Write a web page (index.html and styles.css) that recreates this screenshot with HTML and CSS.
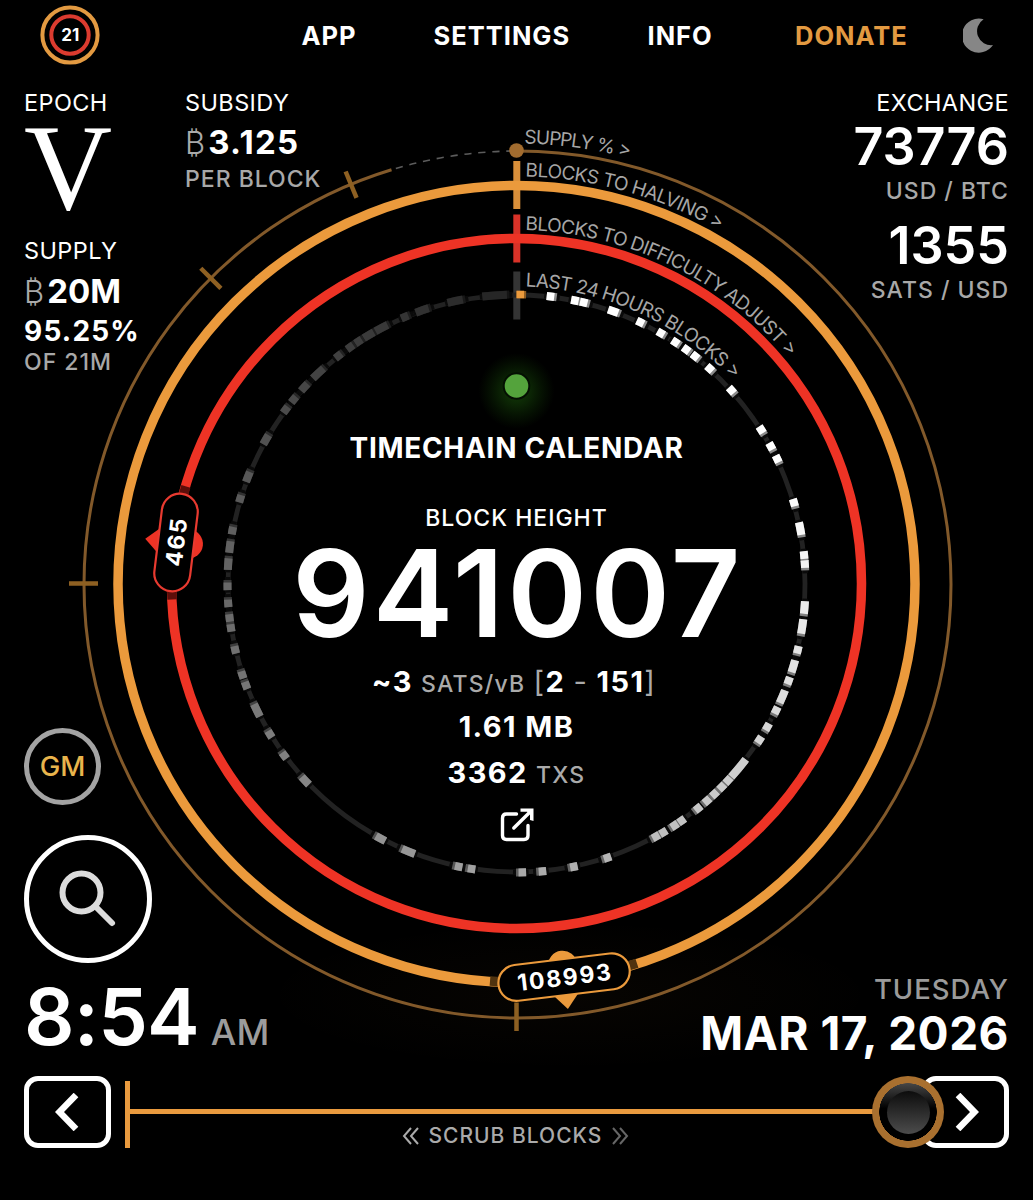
FILE: index.html
```html
<!DOCTYPE html>
<html lang="en">
<head>
<meta charset="utf-8">
<title>Timechain Calendar</title>
<link rel="stylesheet" href="styles.css">
</head>
<body>
<header class="topbar">
  <svg class="logo" viewBox="0 0 60 60">
    <circle class="logo-outer" cx="30" cy="30" r="27.6"/>
    <circle class="logo-inner" cx="30" cy="30" r="18.7"/>
    <text class="logo-text" x="30.3" y="36.2">21</text>
  </svg>
  <nav class="nav">
    <a class="nav-app">APP</a>
    <a class="nav-settings">SETTINGS</a>
    <a class="nav-info">INFO</a>
    <a class="nav-donate">DONATE</a>
  </nav>
  <svg class="moon" viewBox="0 0 32 36"><path d="M20.6 1.3A17 17 0 1 0 30 27A14 14 0 0 1 20.6 1.3Z"/></svg>
</header>

<main class="stage">
  <svg class="dial" viewBox="0 72 1033 1004">
    <defs>
      <path id="arc-supply" d="M516.5 143.5A440.5 440.5 0 0 1 957 584"/>
      <path id="arc-halving" d="M516.5 176.5A407.5 407.5 0 0 1 924 584"/>
      <path id="arc-difficulty" d="M516.5 230A354 354 0 0 1 870.5 584"/>
      <path id="arc-day" d="M516.5 286.5A297.5 297.5 0 0 1 814 584"/>
      <radialGradient id="ember"><stop offset="0" stop-color="#eb9a3c" stop-opacity=".03"/><stop offset="1" stop-color="#eb9a3c" stop-opacity="0"/></radialGradient>
      <radialGradient id="glow"><stop offset="0" stop-color="#1b5a0c" stop-opacity=".7"/><stop offset=".4" stop-color="#184e0a" stop-opacity=".45"/><stop offset="1" stop-color="#123f06" stop-opacity="0"/></radialGradient>
    </defs>
    <ellipse cx="570" cy="995" rx="310" ry="75" fill="url(#ember)"/>

    <circle class="supply-left" cx="517.5" cy="584.5" r="433.5" pathLength="360" transform="rotate(-90 517.5 584.5)"/>
    <circle class="supply-ring" cx="517.5" cy="584.5" r="433.5" pathLength="360" transform="rotate(-90 517.5 584.5)"/>
    <g class="supply-ticks">
      <path d="M516.5 1002.5v28.5M69 583.5h29"/>
      <path d="M516.5 137.5v28.5" transform="rotate(-45 516.5 584)"/>
      <path d="M516.5 137.5v28.5" transform="rotate(-22.5 516.5 584)"/>
    </g>
    <circle class="supply-dot" cx="516.5" cy="150.5" r="7.3"/>

    <path class="tick-halving" d="M516.8 161v48"/>
    <path class="tick-difficulty" d="M516.8 214.5v48"/>
    <path class="tick-day" d="M516.8 271.5v48"/>
    <circle class="ring-halving" cx="516.5" cy="584" r="398.5"/>
    <circle class="ring-difficulty" cx="516.5" cy="583.5" r="345"/>
    <circle class="ring-day" cx="516.5" cy="583.5" r="288.5"/>
    <g id="blocks"></g>

    <g class="arc-labels">
      <text textLength="106"><textPath href="#arc-supply" startOffset="8">SUPPLY % &gt;</textPath></text>
      <text textLength="203"><textPath href="#arc-halving" startOffset="9">BLOCKS TO HALVING &gt;</textPath></text>
      <text textLength="301"><textPath href="#arc-difficulty" startOffset="9">BLOCKS TO DIFFICULTY ADJUST &gt;</textPath></text>
      <text textLength="233"><textPath href="#arc-day" startOffset="9">LAST 24 HOURS BLOCKS &gt;</textPath></text>
    </g>

    <g class="marker marker-halving" transform="translate(516.5 584) rotate(173.1) translate(0 -396)">
      <path class="marker-cut" d="M-74 5Q0 -10 74 5"/>
      <circle cx="0" cy="12" r="14.5"/>
      <path d="M-14.5 -15L0 -32L14.5 -15Z"/>
      <rect x="-66" y="-18" width="132" height="36" rx="18"/>
      <text transform="rotate(180)" y="8.4" textLength="94">108993</text>
    </g>
    <g class="marker marker-difficulty" transform="translate(516.5 584) rotate(276.95) translate(0 -343)">
      <path class="marker-cut" d="M-57 3Q0 -7 57 3"/>
      <circle cx="0" cy="12.5" r="14.5"/>
      <path d="M-14.5 -15L0 -31L14.5 -15Z"/>
      <rect x="-49" y="-18" width="98" height="36" rx="18"/>
      <text y="8.4" textLength="48">465</text>
    </g>

    <circle cx="516.5" cy="391" r="38" fill="url(#glow)"/>
    <circle class="status" cx="516.5" cy="386" r="12.8"/>
  </svg>

  <section class="core">
    <h1 class="title">TIMECHAIN CALENDAR</h1>
    <div class="core-label">BLOCK HEIGHT</div>
    <div class="height">941007</div>
    <div class="stat fee"><b>~3</b> <small>SATS/vB</small> <i>[</i><b>2</b> <i>-</i> <b>151</b><i>]</i></div>
    <div class="stat size">1.61 MB</div>
    <div class="stat txs">3362 <small>TXS</small></div>
    <svg class="external" viewBox="0 0 34 34"><path d="M16.5 6H6.5Q2.5 6 2.5 10V27.5Q2.5 31.5 6.5 31.5H24Q28 31.5 28 27.5V17.5"/><path d="M13.8 20L30 4"/><path class="tip" d="M20.5 .5H33.5V13L30 12V6L27 3.800H20.5Z"/></svg>
  </section>

  <section class="corner top-left">
    <div class="epoch">
      <div class="label">EPOCH</div>
      <div class="numeral">V</div>
      <div class="label supply-label">SUPPLY</div>
      <div class="amount"><span class="coin">₿</span>20M</div>
      <div class="percent">95.25%</div>
      <div class="unit of-total">OF 21M</div>
    </div>
    <div class="subsidy">
      <div class="label">SUBSIDY</div>
      <div class="amount subsidy-amount"><span class="coin">₿</span>3.125</div>
      <div class="unit per-block">PER BLOCK</div>
    </div>
  </section>

  <section class="corner top-right">
    <div class="label exchange">EXCHANGE</div>
    <div class="price">73776</div>
    <div class="unit usd">USD / BTC</div>
    <div class="price sats">1355</div>
    <div class="unit sats-unit">SATS / USD</div>
  </section>

  <section class="corner bottom-left">
    <div class="gm">GM</div>
    <div class="search"><svg viewBox="0 0 60 60"><circle cx="23.5" cy="23.5" r="19"/><path d="M38 38L54 54"/></svg></div>
    <div class="clock">8:54<span>AM</span></div>
  </section>

  <section class="corner bottom-right">
    <div class="weekday">TUESDAY</div>
    <div class="date">MAR 17, 2026</div>
  </section>
</main>

<footer class="scrubber">
  <div class="step prev"><svg viewBox="0 0 24 38"><path d="M21 2L4.500 19L21 36"/></svg></div>
  <div class="track">
    <div class="rail"></div>
    <div class="hint">
      <svg viewBox="0 0 18 18"><path d="M9 1L2 9L9 17M16 1L9 9L16 17"/></svg>
      <span>SCRUB BLOCKS</span>
      <svg class="dim" viewBox="0 0 18 18"><path d="M2 1L9 9L2 17M9 1L16 9L9 17"/></svg>
    </div>
    <div class="knob"></div>
  </div>
  <div class="step next"><svg viewBox="0 0 24 38"><path d="M3 2L19.500 19L3 36"/></svg></div>
</footer>
<script src="blocks.js"></script>
</body>
</html>
```
FILE: blocks.js
```js
// Blocks mined in the last day: [centre angle, half width] in degrees, newest first.
const blocks = [
  [6.8], [11.7], [13.5], [19.6, 1.1], [25.4], [30], [33.4], [36], [38.2], [42], [48.1],
  [57.9], [61.7], [64.5], [73.8], [79.1, 1.3], [84.4], [86.2], [94.8, 1.3], [98.6, 1.5],
  [103.3], [106.7, 1.3], [109.7], [113.1, 1.4], [116.1], [119.8], [122.8],
  [129.8, 2.3], [133], [134.8], [136.8], [138.8], [141.1], [145.2], [146.9],
  [149.5], [151.2], [161.7], [168.6], [174.9], [178.9], [189], [191.6],
  [202, 1.4], [208.1, 1.1], [227, 1.1], [233.5], [238.6], [244, 1.4], [249.4], [251.6],
  [256.8], [261.2], [263.2], [266.1], [269.5], [273.9, 1.2], [277.3, 1.2],
  [280.6], [287.1], [291.7, 1.1], [299.9, 1.1], [307], [309.6],
  [312.8, 1], [316.7, 1.5], [322], [324.9], [326.9], [329.3, 1.2],
  [332.2, 1.4], [337.3], [341, 1.4], [347.8, 1.6], [355.7, 2.5]
];

const point = (deg, r) => {
  const a = deg * Math.PI / 180;
  return (516.5 + r * Math.sin(a)).toFixed(2) + " " + (583.5 - r * Math.cos(a)).toFixed(2);
};
const arc = (from, to, width, color) =>
  `<path d="M${point(from, 289)}A289 289 0 0 1 ${point(to, 289)}" stroke="${color}" stroke-width="${width}"/>`;
const gray = v => { const n = Math.round(v); return `rgb(${n},${n},${n})`; };
const shade = deg => deg < 70 ? 255
  : deg < 180 ? 255 - (deg - 70) * .8
  : deg < 300 ? 167 - (deg - 180) * .72
  : 80 - (deg - 300) * .75;

let back = "", front = "";
for (const [mid, half = .8] of blocks) {
  const v = shade(mid);
  back += arc(mid - half - .5, mid + half + 1, 5.5, "#0a0a0a");
  front += arc(mid - half, mid + half + .4, 8, gray(v * .55));
  front += arc(mid - half, mid + half - .1, 8, gray(v));
}
front += arc(0, 1.9, 7.5, "#8f5c20") + arc(0, 1.5, 7.5, "#eb9a3c");
document.getElementById("blocks").innerHTML = back + front;
```
FILE: styles.css
```css
* { box-sizing: border-box; }
body {
  margin: 0;
  width: 1033px;
  height: 1200px;
  overflow: hidden;
  background: #000;
  color: #fff;
  font-family: Inter, "Liberation Sans", sans-serif;
  font-kerning: normal;
}
svg { display: block; fill: none; }

.topbar { height: 72px; padding: 0 38px 0 39.5px; display: flex; align-items: center; }
.logo { width: 60px; height: 60px; margin-top: -2px; }
.logo-outer { stroke: #e39a41; stroke-width: 4; }
.logo-inner { stroke: #dc3b2f; stroke-width: 4; }
.logo-text { fill: #fff; font-size: 17px; font-weight: 700; text-anchor: middle; }
.nav { flex: 1; display: flex; padding-left: 202px; font-size: 25.5px; font-weight: 650; line-height: 72px; letter-spacing: 1px; }
.nav a { white-space: nowrap; }
.nav-app { width: 132px; }
.nav-settings { width: 214px; }
.nav-info { width: 147.5px; }
.nav-donate { color: #e39a41; }
.moon { width: 32px; height: 36px; fill: #868686; }

.stage { height: 1004px; display: grid; grid-template-columns: 1fr; grid-template-rows: 1fr; }
.stage > * { grid-area: 1 / 1; }
.dial { width: 1033px; height: 1004px; }
.supply-ring { stroke: #82592a; stroke-width: 3; stroke-dasharray: 343.1 16.9; }
.supply-left { stroke: #5c5c5c; stroke-width: 1.6; stroke-dasharray: 0 343.7 .95 .9 .95 .9 .95 .9 .95 .9 .95 .9 .95 .9 .95 .9 .95 .9 .95 3; }
.supply-ticks { stroke: #8e6022; stroke-width: 4.5; }
.supply-dot { fill: #a26c2f; }
.tick-halving { stroke: #d98f3a; stroke-width: 7; }
.tick-difficulty { stroke: #d93228; stroke-width: 7; }
.tick-day { stroke: #343434; stroke-width: 7; }
.ring-halving { stroke: #eb9a3c; stroke-width: 9.5; }
.ring-difficulty { stroke: #ee3325; stroke-width: 9.5; }
.ring-day { stroke: #222; stroke-width: 4.8; }
.arc-labels { fill: #a6a6a6; font-size: 19px; font-weight: 400; }
.marker { fill: #eb9a3c; }
.marker rect { fill: #000; stroke: #eb9a3c; stroke-width: 2.2; }
.marker text { fill: #fff; font-size: 23px; font-weight: 650; text-anchor: middle; }
.marker-cut { fill: none; stroke: #50330f; stroke-width: 9.5; }
.marker-difficulty { fill: #ee3325; }
.marker-difficulty rect { stroke: #e83a30; }
.marker-difficulty .marker-cut { stroke: #5c0e0a; }
.status { fill: #54a33c; stroke: #040f02; stroke-width: 2; }

.core { display: flex; flex-direction: column; align-items: center; padding-top: 356px; white-space: nowrap; }
.title { margin: 0; font-size: 28px; font-weight: 650; line-height: 40px; letter-spacing: .7px; }
.core-label { margin-top: 34px; font-size: 23px; font-weight: 550; line-height: 32px; letter-spacing: 1px; }
.height { margin-top: -1px; padding-left: 3px; font-size: 121px; font-weight: 600; line-height: 120px; letter-spacing: 3.2px; }
.stat { height: 45.5px; font-size: 29px; font-weight: 650; line-height: 45.5px; letter-spacing: 1.4px; }
.stat b { font-weight: 650; }
.stat i { font-style: normal; font-weight: 400; color: #aaa; }
.stat small { font-size: 23px; font-weight: 550; letter-spacing: 1.2px; line-height: 1; color: #aaa; }
.fee { margin-top: 5.5px; padding-right: 5px; }
.external { width: 34px; height: 34px; margin-top: 12.5px; stroke: #fff; stroke-width: 3.4; stroke-linecap: round; }
.external .tip { fill: #fff; stroke: none; }

.corner { white-space: nowrap; }
.label { font-size: 23.5px; font-weight: 400; line-height: 30px; letter-spacing: .4px; }
.unit { font-size: 23px; font-weight: 550; color: #a8a8a8; line-height: 30px; letter-spacing: 1px; }
.top-left { justify-self: start; align-self: start; display: flex; padding: 16px 0 0 24px; }
.epoch { width: 161px; }
.numeral { font-family: "Liberation Serif", serif; font-size: 122px; line-height: 90px; margin-top: 5px; }
.supply-label { margin-top: 23px; }
.amount { font-size: 33px; font-weight: 650; line-height: 40px; margin-top: 5px; }
.subsidy-amount { margin-top: 4px; letter-spacing: 1.3px; }
.coin { font-weight: 300; font-size: 31px; letter-spacing: 0; margin-right: 3px; color: #aaa; }
.percent { font-size: 28px; font-weight: 650; line-height: 38px; letter-spacing: 1.2px; }
.of-total { margin-top: -3px; }
.per-block { margin-top: 1px; }
.top-right { justify-self: end; align-self: start; padding: 16px 24px 0 0; text-align: right; }
.price { font-size: 52px; font-weight: 600; line-height: 60px; margin-top: -1px; }
.usd { margin-top: -1px; }
.price.sats { margin-top: 10px; }
.sats-unit { margin-top: -1px; }
.bottom-left { justify-self: start; align-self: end; padding: 0 0 4px 24px; }
.gm { width: 77px; height: 77px; border: 5px solid #a3a3a3; border-radius: 50%; color: #e9b44c; font-size: 27.5px; font-weight: 550; line-height: 67px; text-align: center; }
.search { width: 128px; height: 128px; border: 5px solid #fff; border-radius: 50%; margin-top: 30px; display: flex; align-items: center; justify-content: center; }
.search svg { width: 60px; height: 60px; stroke: #dcdcdc; stroke-width: 6; stroke-linecap: round; }
.clock { display: flex; align-items: baseline; margin-top: 13px; font-size: 79px; font-weight: 600; line-height: 80px; letter-spacing: -.8px; }
.clock span { margin-left: 12px; font-size: 36px; font-weight: 550; letter-spacing: 0; color: #9c9c9c; }
.bottom-right { justify-self: end; align-self: end; padding: 0 24px 18px 0; text-align: right; }
.weekday { font-size: 27.5px; font-weight: 550; line-height: 38px; letter-spacing: 1px; color: #9a9a9a; }
.date { font-size: 46px; font-weight: 700; line-height: 50px; letter-spacing: .5px; }

.scrubber { height: 72px; padding: 0 24px; display: flex; }
.step { width: 87px; height: 72px; border: 5px solid #fff; border-radius: 14px; display: flex; align-items: center; justify-content: center; }
.step svg { width: 24px; height: 38px; stroke: #fff; stroke-width: 6.5; }
.prev { padding-right: 2px; }
.next { padding-left: 2px; }
.track { flex: 1; margin: 5px 0 0 14px; border-left: 5px solid #e99a3e; height: 67px; position: relative; }
.rail { height: 5px; margin-top: 28px; background: #e99a3e; }
.hint { display: flex; align-items: center; gap: 8.5px; padding-left: 272px; margin-top: 7px; font-size: 21px; font-weight: 550; line-height: 30px; letter-spacing: 1px; color: #aaa; white-space: nowrap; }
.hint svg { width: 18px; height: 18px; stroke: #aaa; stroke-width: 2; }
.hint .dim { stroke: #666; }
.knob {
  position: absolute; right: -22px; top: -5px; width: 72px; height: 72px; border-radius: 50%;
  background: radial-gradient(circle, transparent 28.5px, #a9702f 29px), linear-gradient(#5a5a5a, #000 45%);
}
.knob::after { content: ""; position: absolute; inset: 14.5px; border-radius: 50%; background: linear-gradient(#0c0c0c, #4c4c4c); }
```
